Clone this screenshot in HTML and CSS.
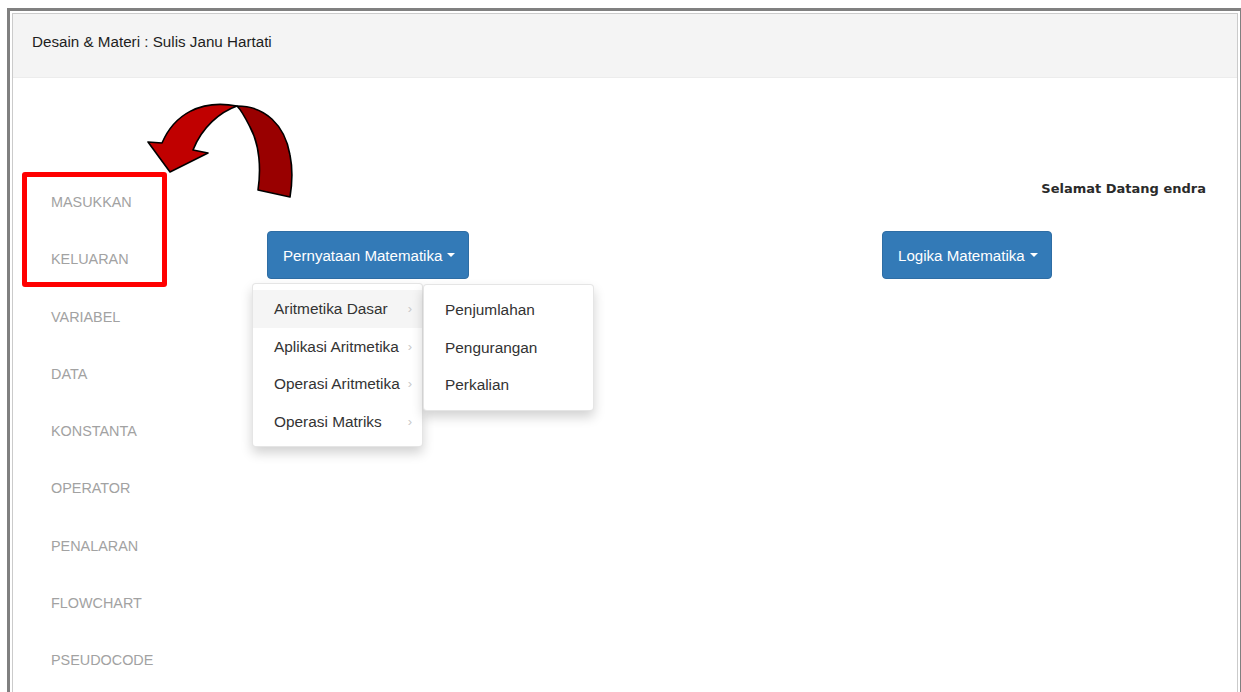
FILE: index.html
```html
<!DOCTYPE html>
<html lang="id">
<head>
<meta charset="utf-8">
<title>Desain &amp; Materi</title>
<link rel="stylesheet" href="styles.css">
</head>
<body>
<div class="frame">
  <div class="inner">
    <header class="topbar">Desain &amp; Materi : Sulis Janu Hartati</header>
    <div class="main">
      <nav class="sidebar">
        <a class="nav-item">MASUKKAN</a>
        <a class="nav-item">KELUARAN</a>
        <a class="nav-item">VARIABEL</a>
        <a class="nav-item">DATA</a>
        <a class="nav-item">KONSTANTA</a>
        <a class="nav-item">OPERATOR</a>
        <a class="nav-item">PENALARAN</a>
        <a class="nav-item">FLOWCHART</a>
        <a class="nav-item">PSEUDOCODE</a>
      </nav>
      <section class="content">
        <p class="welcome">Selamat Datang endra</p>
        <div class="actions">
          <div class="dropdown">
            <button class="btn">Pernyataan Matematika <span class="caret"></span></button>
            <ul class="menu">
              <li class="menu-item active">Aritmetika Dasar <span class="chev">&#8250;</span>
                <ul class="menu submenu">
                  <li class="menu-item">Penjumlahan</li>
                  <li class="menu-item">Pengurangan</li>
                  <li class="menu-item">Perkalian</li>
                </ul>
              </li>
              <li class="menu-item">Aplikasi Aritmetika <span class="chev">&#8250;</span></li>
              <li class="menu-item">Operasi Aritmetika <span class="chev">&#8250;</span></li>
              <li class="menu-item">Operasi Matriks <span class="chev">&#8250;</span></li>
            </ul>
          </div>
          <div class="dropdown">
            <button class="btn">Logika Matematika <span class="caret"></span></button>
          </div>
        </div>
      </section>
    </div>
  </div>
</div>

<div class="callout-box"></div>
<svg class="callout-arrow" width="160" height="110" viewBox="0 0 160 110">
  <path class="arrow-back" d="M97,11 C125,11 145,30 150,60 C153,75 152,90 150,102 L118,95 C121,75 120,50 110,32 C106,24 102,16 97,11 Z"/>
  <path class="arrow-front" d="M97,11 C80,17 62,32 53,55 L68,58 L30,77 L8,47 L22,48 C34,20 60,4 97,11 Z"/>
</svg>
</body>
</html>
```
FILE: styles.css
```css
html, body {
  margin: 0;
  padding: 0;
  overflow: hidden;
  background: #fff;
}

body {
  font-family: "Liberation Sans", Arial, sans-serif;
  color: #333;
}

.frame {
  margin: 8px 0 0 7px;
  width: 1226px;
  height: 700px;
  border: 3px solid #808080;
  border-right-width: 5px;
  border-bottom: none;
  padding: 2px 2px 0 2px;
}

.inner {
  height: 100%;
  border: 1px solid #cbcbcb;
  border-bottom: none;
}

.topbar {
  height: 64px;
  box-sizing: border-box;
  padding: 0 0 0 19px;
  line-height: 56px;
  background: #f4f4f4;
  border-bottom: 1px solid #ececec;
  font-size: 15.2px;
  color: #1e1e1e;
}

.main {
  display: flex;
}

.sidebar {
  width: 236px;
  flex: none;
  padding-top: 96px;
  display: flex;
  flex-direction: column;
}

.nav-item {
  height: 57.25px;
  line-height: 57.25px;
  padding-left: 38px;
  font-size: 14.4px;
  color: #a2a2a2;
}

.content {
  flex: 1;
  padding: 101px 31px 0 18px;
}

.welcome {
  margin: 0 0 32px;
  text-align: right;
  line-height: 20px;
  font-family: "DejaVu Sans", Verdana, sans-serif;
  font-weight: bold;
  font-size: 13px;
  color: #2a2a2a;
}

.actions {
  display: grid;
  grid-template-columns: 615px auto;
  justify-content: start;
}

.dropdown {
  position: relative;
}

.btn {
  display: inline-flex;
  align-items: center;
  gap: 5px;
  height: 48px;
  padding: 0 13px 0 15px;
  border: 1px solid #2e6da4;
  border-radius: 4px;
  background: #337ab7;
  color: #fff;
  font-family: inherit;
  font-size: 15.1px;
}

.caret {
  width: 0;
  height: 0;
  border-top: 4px solid #fff;
  border-left: 4px solid transparent;
  border-right: 4px solid transparent;
}

.menu {
  list-style: none;
  margin: 0;
  padding: 6px 0;
  width: 171px;
  box-sizing: border-box;
  background: #fff;
  border: 1px solid rgba(0, 0, 0, 0.1);
  border-radius: 4px;
  box-shadow: 0 6px 12px rgba(0, 0, 0, 0.18);
}

.dropdown > .menu {
  position: absolute;
  top: 52px;
  left: -15px;
  z-index: 2;
}

.menu-item {
  position: relative;
  height: 37.5px;
  line-height: 37.5px;
  padding: 0 0 0 21px;
  font-size: 15.4px;
  color: #333;
  white-space: nowrap;
}

.menu-item.active {
  background: #f5f5f5;
}

.chev {
  position: absolute;
  right: 10px;
  top: 0;
  color: #c8c8c8;
  font-size: 13px;
}

.submenu {
  position: absolute;
  top: -6px;
  left: 100%;
  margin-left: 1px;
}

/* annotation overlay: highlight box and curved pointer */
.callout-box {
  position: absolute;
  left: 22px;
  top: 172px;
  width: 135px;
  height: 105px;
  border: 5px solid #ff0000;
  border-radius: 3px;
}

.callout-arrow {
  position: absolute;
  left: 140px;
  top: 95px;
}

.arrow-front {
  fill: #c00000;
  stroke: #000;
  stroke-width: 1.6;
  stroke-linejoin: round;
}

.arrow-back {
  fill: #990000;
  stroke: #000;
  stroke-width: 1.6;
  stroke-linejoin: round;
}
```
